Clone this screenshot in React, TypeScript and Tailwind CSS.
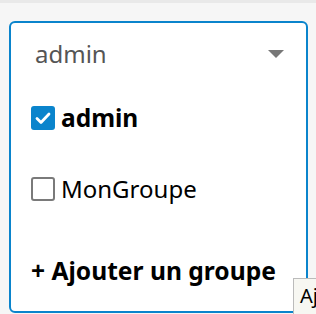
import React from "react";

const groupes = [
    { nom: "admin", coche: true },
    { nom: "MonGroupe", coche: false },
];

const Caret = () => (
    <svg width="16" height="8" viewBox="0 0 16 8" className="shrink-0">
        <path d="M0 0h16L8 8z" fill="#777" />
    </svg>
);

const Checkbox: React.FC<{ coche: boolean }> = ({ coche }) =>
    coche ? (
        <span className="flex h-[24px] w-[24px] shrink-0 items-center justify-center rounded-[3px] bg-[#0a84cc]">
            <svg width="18" height="18" viewBox="0 0 18 18">
                <path d="M3 9.5l4 4L15 5" fill="none" stroke="#fff" strokeWidth="2.8" strokeLinecap="round" strokeLinejoin="round" />
            </svg>
        </span>
    ) : (
        <span className="h-[24px] w-[24px] shrink-0 rounded-[3px] border-2 border-[#7a7a7a] bg-white" />
    );

export default function App() {
    return (
        <div className="relative h-[314px] w-[316px] overflow-hidden bg-[#f6f6f6] font-['Noto_Sans',sans-serif]">
            <div className="h-[3px] w-full bg-[#e9e9e9]" />
            <div className="absolute left-[9px] top-[21px] h-[292px] w-[299px] rounded-[6px] border-2 border-[#0a84cc] bg-white">
                <div className="flex items-center justify-between pl-[24px] pr-[22px] pt-[13px]">
                    <span className="text-[24px] leading-[36px] text-[#555]">admin</span>
                    <Caret />
                </div>
                <div className="flex flex-col pl-[20px]">
                    {groupes.map((g, idx) => (
                        <label key={g.nom} className={idx === 0 ? "mt-[28px] flex items-center gap-[6px]" : "mt-[35px] flex items-center gap-[6px]"}>
                            <Checkbox coche={g.coche} />
                            <span className={g.coche ? "text-[24.5px] font-bold leading-[36px] text-black" : "text-[24px] leading-[36px] text-black"}>{g.nom}</span>
                        </label>
                    ))}
                    <div className="mt-[46px] text-[24.6px] font-bold leading-[36px] text-black">+ Ajouter un groupe</div>
                </div>
            </div>
            <div className="absolute left-[293px] top-[278px] h-[40px] w-[120px] overflow-hidden whitespace-nowrap border border-[#bbb] bg-[#f7f7f2] pl-[6px] pt-[7px] text-[20px] leading-none text-black">
                Ajouter un groupe
            </div>
        </div>
    );
}
